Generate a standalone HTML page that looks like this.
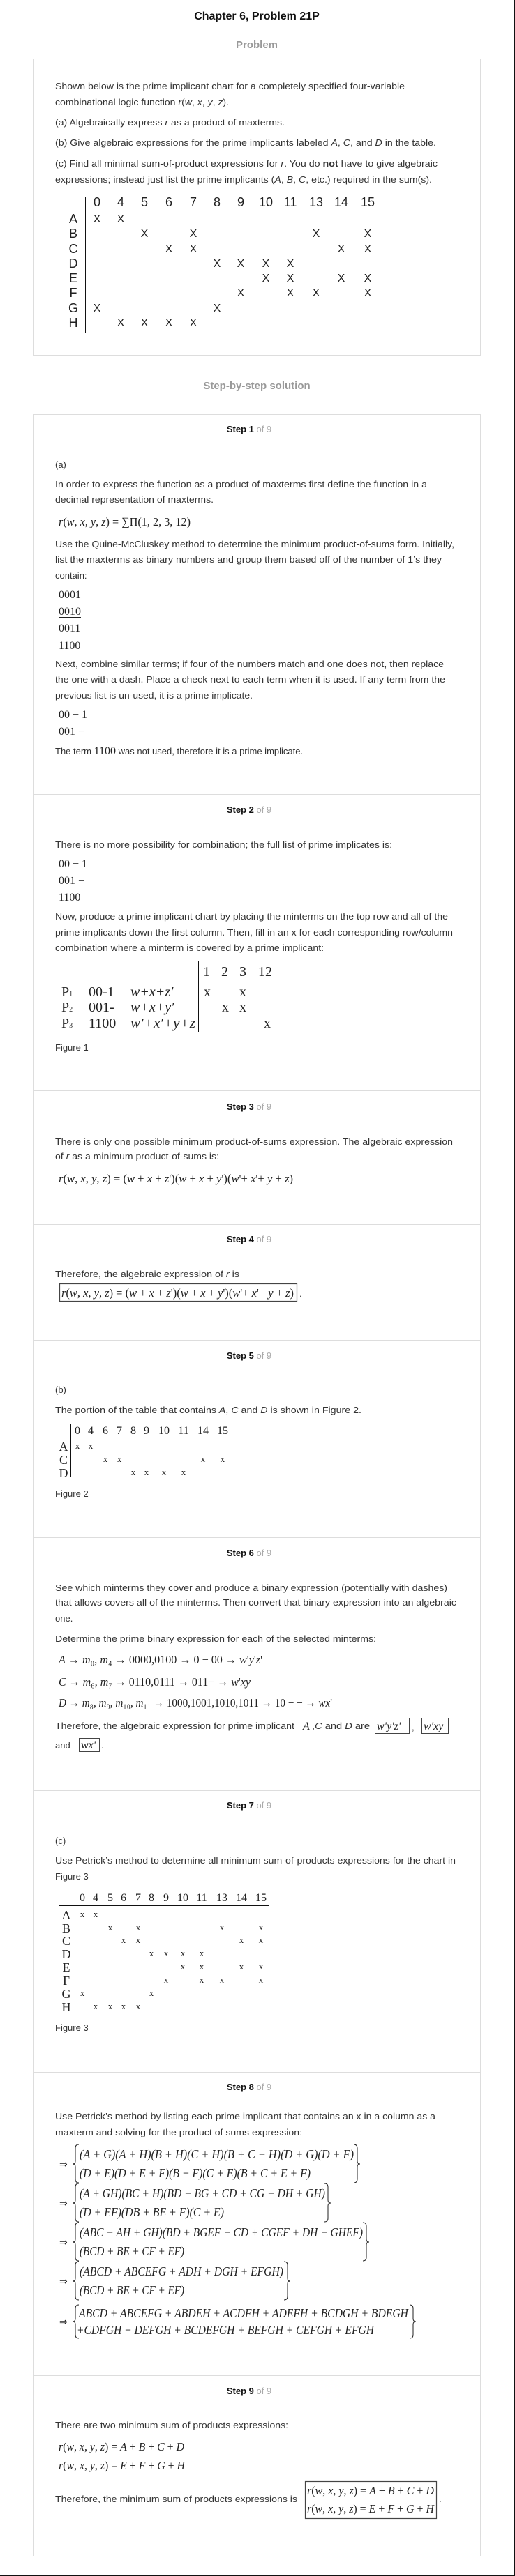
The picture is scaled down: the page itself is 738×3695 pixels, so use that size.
<!DOCTYPE html>
<html><head><meta charset="utf-8">
<style>
html,body{margin:0;padding:0;background:#fff;}
body{width:738px;height:3695px;overflow:hidden;}
svg{display:block;}
.s{font-family:"Liberation Sans",Arial,sans-serif;font-size:13px;fill:#333;}
.m{font-family:"Liberation Serif","Times New Roman",serif;fill:#222;}
.i{font-style:italic;}
.h{font-family:"Liberation Sans",Arial,sans-serif;font-weight:bold;}
</style></head><body>
<svg width="738" height="3695" viewBox="0 0 738 3695" xmlns="http://www.w3.org/2000/svg">
<rect x="0" y="0" width="738" height="3695" fill="#fff"/>
<rect x="736" y="0" width="2" height="3695" fill="#111"/>
<rect x="0" y="3693" width="738" height="2" fill="#111"/>

<!-- headers -->
<text x="368" y="28" text-anchor="middle" class="h" font-size="16" fill="#111">Chapter 6, Problem 21P</text>
<text x="368" y="69" text-anchor="middle" class="h" font-size="15" fill="#999">Problem</text>

<!-- problem box -->
<rect x="48.5" y="84.5" width="640" height="425" fill="none" stroke="#ddd" stroke-width="1"/>
<text x="79" y="128" class="s" textLength="501" lengthAdjust="spacingAndGlyphs">Shown below is the prime implicant chart for a completely specified four-variable</text>
<text x="79" y="151" class="s" textLength="249" lengthAdjust="spacingAndGlyphs">combinational logic function <tspan font-style="italic">r</tspan>(<tspan font-style="italic">w</tspan>, <tspan font-style="italic">x</tspan>, <tspan font-style="italic">y</tspan>, <tspan font-style="italic">z</tspan>).</text>
<text x="79" y="180" class="s" textLength="329" lengthAdjust="spacingAndGlyphs">(a) Algebraically express <tspan font-style="italic">r</tspan> as a product of maxterms.</text>
<text x="79" y="209" class="s" textLength="546" lengthAdjust="spacingAndGlyphs">(b) Give algebraic expressions for the prime implicants labeled <tspan font-style="italic">A</tspan>, <tspan font-style="italic">C</tspan>, and <tspan font-style="italic">D</tspan> in the table.</text>
<text x="79" y="239" class="s" textLength="548" lengthAdjust="spacingAndGlyphs">(c) Find all minimal sum-of-product expressions for <tspan font-style="italic">r</tspan>. You do <tspan font-weight="bold">not</tspan> have to give algebraic</text>
<text x="79" y="262" class="s" textLength="540" lengthAdjust="spacingAndGlyphs">expressions; instead just list the prime implicants (<tspan font-style="italic">A</tspan>, <tspan font-style="italic">B</tspan>, <tspan font-style="italic">C</tspan>, etc.) required in the sum(s).</text>

<!-- problem chart -->
<g font-family="'Liberation Sans',Arial,sans-serif" fill="#222" text-anchor="middle">
<line x1="122.5" y1="282" x2="122.5" y2="477" stroke="#111" stroke-width="1"/>
<line x1="88" y1="302.5" x2="546" y2="302.5" stroke="#111" stroke-width="1"/>
<g font-size="18">
<text x="139" y="296">0</text><text x="173" y="296">4</text><text x="207" y="296">5</text><text x="242" y="296">6</text><text x="277" y="296">7</text><text x="311" y="296">8</text><text x="345" y="296">9</text><text x="381" y="296">10</text><text x="416" y="296">11</text><text x="453" y="296">13</text><text x="489" y="296">14</text><text x="527" y="296">15</text>
<text x="105" y="320">A</text><text x="105" y="341">B</text><text x="105" y="363">C</text><text x="105" y="384">D</text><text x="105" y="405">E</text><text x="105" y="426">F</text><text x="105" y="448">G</text><text x="105" y="469">H</text>
</g>
<g font-size="16">
<text x="139" y="319">X</text><text x="173" y="319">X</text>
<text x="207" y="340">X</text><text x="277" y="340">X</text><text x="453" y="340">X</text><text x="527" y="340">X</text>
<text x="242" y="362">X</text><text x="277" y="362">X</text><text x="489" y="362">X</text><text x="527" y="362">X</text>
<text x="311" y="383">X</text><text x="345" y="383">X</text><text x="381" y="383">X</text><text x="416" y="383">X</text>
<text x="381" y="404">X</text><text x="416" y="404">X</text><text x="489" y="404">X</text><text x="527" y="404">X</text>
<text x="345" y="425">X</text><text x="416" y="425">X</text><text x="453" y="425">X</text><text x="527" y="425">X</text>
<text x="139" y="447">X</text><text x="311" y="447">X</text>
<text x="173" y="468">X</text><text x="207" y="468">X</text><text x="242" y="468">X</text><text x="277" y="468">X</text>
</g>
</g>

<text x="368" y="558" text-anchor="middle" class="h" font-size="15" fill="#999">Step-by-step solution</text>

<!-- solution box -->
<rect x="48.5" y="594.5" width="640" height="3072" fill="none" stroke="#ddd" stroke-width="1"/>
<g stroke="#ddd" stroke-width="1">
<line x1="49" y1="1139.5" x2="688" y2="1139.5"/>
<line x1="49" y1="1564.5" x2="688" y2="1564.5"/>
<line x1="49" y1="1756.5" x2="688" y2="1756.5"/>
<line x1="49" y1="1922.5" x2="688" y2="1922.5"/>
<line x1="49" y1="2205.5" x2="688" y2="2205.5"/>
<line x1="49" y1="2568.5" x2="688" y2="2568.5"/>
<line x1="49" y1="2972.5" x2="688" y2="2972.5"/>
<line x1="49" y1="3407.5" x2="688" y2="3407.5"/>
</g>

<!-- step headings -->
<g font-family="'Liberation Sans',Arial,sans-serif" font-size="13" text-anchor="middle">
<text x="357" y="620"><tspan font-weight="bold" fill="#111">Step 1</tspan><tspan fill="#aaa"> of 9</tspan></text>
<text x="357" y="1166"><tspan font-weight="bold" fill="#111">Step 2</tspan><tspan fill="#aaa"> of 9</tspan></text>
<text x="357" y="1592"><tspan font-weight="bold" fill="#111">Step 3</tspan><tspan fill="#aaa"> of 9</tspan></text>
<text x="357" y="1782"><tspan font-weight="bold" fill="#111">Step 4</tspan><tspan fill="#aaa"> of 9</tspan></text>
<text x="357" y="1949"><tspan font-weight="bold" fill="#111">Step 5</tspan><tspan fill="#aaa"> of 9</tspan></text>
<text x="357" y="2232"><tspan font-weight="bold" fill="#111">Step 6</tspan><tspan fill="#aaa"> of 9</tspan></text>
<text x="357" y="2594"><tspan font-weight="bold" fill="#111">Step 7</tspan><tspan fill="#aaa"> of 9</tspan></text>
<text x="357" y="2998"><tspan font-weight="bold" fill="#111">Step 8</tspan><tspan fill="#aaa"> of 9</tspan></text>
<text x="357" y="3434"><tspan font-weight="bold" fill="#111">Step 9</tspan><tspan fill="#aaa"> of 9</tspan></text>
</g>

<!-- Step 1 -->
<text x="79" y="671" class="s">(a)</text>
<text x="79" y="699" class="s" textLength="533" lengthAdjust="spacingAndGlyphs">In order to express the function as a product of maxterms first define the function in a</text>
<text x="79" y="721" class="s" textLength="227" lengthAdjust="spacingAndGlyphs">decimal representation of maxterms.</text>
<text x="84" y="754" class="m" font-size="17" textLength="189" lengthAdjust="spacingAndGlyphs"><tspan class="i">r</tspan>(<tspan class="i">w</tspan>, <tspan class="i">x</tspan>, <tspan class="i">y</tspan>, <tspan class="i">z</tspan>) = ∑Π(1, 2, 3, 12)</text>
<text x="79" y="785" class="s" textLength="572" lengthAdjust="spacingAndGlyphs">Use the Quine-McCluskey method to determine the minimum product-of-sums form. Initially,</text>
<text x="79" y="807" class="s" textLength="554" lengthAdjust="spacingAndGlyphs">list the maxterms as binary numbers and group them based off of the number of 1’s they</text>
<text x="79" y="830" class="s">contain:</text>
<g class="m" font-size="16">
<text x="84" y="858">0001</text>
<text x="84" y="882">0010</text>
<line x1="84" y1="885.5" x2="116" y2="885.5" stroke="#222" stroke-width="1"/>
<text x="84" y="906">0011</text>
<text x="84" y="931">1100</text>
</g>
<text x="79" y="957" class="s" textLength="557" lengthAdjust="spacingAndGlyphs">Next, combine similar terms; if four of the numbers match and one does not, then replace</text>
<text x="79" y="979" class="s" textLength="559" lengthAdjust="spacingAndGlyphs">the one with a dash. Place a check next to each term when it is used. If any term from the</text>
<text x="79" y="1002" class="s" textLength="283" lengthAdjust="spacingAndGlyphs">previous list is un-used, it is a prime implicate.</text>
<g class="m" font-size="16">
<text x="84" y="1030">00 − 1</text>
<text x="84" y="1054">001 −</text>
</g>
<text x="79" y="1082" class="s">The term <tspan font-family="'Liberation Serif',serif" font-size="16" fill="#222">1100</tspan> was not used, therefore it is a prime implicate.</text>

<!-- Step 2 -->
<text x="79" y="1216" class="s" textLength="483" lengthAdjust="spacingAndGlyphs">There is no more possibility for combination; the full list of prime implicates is:</text>
<g class="m" font-size="16">
<text x="84" y="1244">00 − 1</text>
<text x="84" y="1268">001 −</text>
<text x="84" y="1292">1100</text>
</g>
<text x="79" y="1319" class="s" textLength="563" lengthAdjust="spacingAndGlyphs">Now, produce a prime implicant chart by placing the minterms on the top row and all of the</text>
<text x="79" y="1342" class="s" textLength="570" lengthAdjust="spacingAndGlyphs">prime implicants down the first column. Then, fill in an x for each corresponding row/column</text>
<text x="79" y="1364" class="s" textLength="385" lengthAdjust="spacingAndGlyphs">combination where a minterm is covered by a prime implicant:</text>
<g class="m" font-size="20">
<line x1="284.5" y1="1378" x2="284.5" y2="1480" stroke="#111"/>
<line x1="84" y1="1408.5" x2="393" y2="1408.5" stroke="#111"/>
<g text-anchor="middle">
<text x="296" y="1400">1</text><text x="322" y="1400">2</text><text x="348" y="1400">3</text><text x="380" y="1400">12</text>
<text x="297" y="1429">x</text><text x="348" y="1429">x</text>
<text x="323" y="1451">x</text><text x="348" y="1451">x</text>
<text x="383" y="1474">x</text>
</g>
<text x="88" y="1429">P<tspan font-size="10">1</tspan></text>
<text x="127" y="1429">00-1</text>
<text x="187" y="1429" class="i">w+x+z′</text>
<text x="88" y="1451">P<tspan font-size="10">2</tspan></text>
<text x="127" y="1451">001-</text>
<text x="187" y="1451" class="i">w+x+y′</text>
<text x="88" y="1474">P<tspan font-size="10">3</tspan></text>
<text x="127" y="1474">1100</text>
<text x="187" y="1474" class="i" textLength="93" lengthAdjust="spacingAndGlyphs">w′+x′+y+z</text>
</g>
<text x="79" y="1507" class="s">Figure 1</text>

<!-- Step 3 -->
<text x="79" y="1642" class="s" textLength="570" lengthAdjust="spacingAndGlyphs">There is only one possible minimum product-of-sums expression. The algebraic expression</text>
<text x="79" y="1663" class="s" textLength="235" lengthAdjust="spacingAndGlyphs">of <tspan font-style="italic">r</tspan> as a minimum product-of-sums is:</text>
<text x="84" y="1696" class="m" font-size="17" textLength="336" lengthAdjust="spacingAndGlyphs"><tspan class="i">r</tspan>(<tspan class="i">w</tspan>, <tspan class="i">x</tspan>, <tspan class="i">y</tspan>, <tspan class="i">z</tspan>) = (<tspan class="i">w</tspan> + <tspan class="i">x</tspan> + <tspan class="i">z</tspan>')(<tspan class="i">w</tspan> + <tspan class="i">x</tspan> + <tspan class="i">y</tspan>')(<tspan class="i">w</tspan>'+ <tspan class="i">x</tspan>'+ <tspan class="i">y</tspan> + <tspan class="i">z</tspan>)</text>

<!-- Step 4 -->
<text x="79" y="1832" class="s" textLength="264" lengthAdjust="spacingAndGlyphs">Therefore, the algebraic expression of <tspan font-style="italic">r</tspan> is</text>
<rect x="85.5" y="1841.5" width="340" height="25" fill="none" stroke="#444" stroke-width="1.2"/>
<text x="88" y="1860" class="m" font-size="17" textLength="333" lengthAdjust="spacingAndGlyphs"><tspan class="i">r</tspan>(<tspan class="i">w</tspan>, <tspan class="i">x</tspan>, <tspan class="i">y</tspan>, <tspan class="i">z</tspan>) = (<tspan class="i">w</tspan> + <tspan class="i">x</tspan> + <tspan class="i">z</tspan>')(<tspan class="i">w</tspan> + <tspan class="i">x</tspan> + <tspan class="i">y</tspan>')(<tspan class="i">w</tspan>'+ <tspan class="i">x</tspan>'+ <tspan class="i">y</tspan> + <tspan class="i">z</tspan>)</text>
<text x="429" y="1860" class="s">.</text>

<!-- Step 5 -->
<text x="79" y="1998" class="s">(b)</text>
<text x="79" y="2027" class="s" textLength="439" lengthAdjust="spacingAndGlyphs">The portion of the table that contains <tspan font-style="italic">A</tspan>, <tspan font-style="italic">C</tspan> and <tspan font-style="italic">D</tspan> is shown in Figure 2.</text>
<g class="m" text-anchor="middle">
<line x1="101.5" y1="2042" x2="101.5" y2="2119" stroke="#111"/>
<line x1="85" y1="2062.5" x2="328" y2="2062.5" stroke="#111"/>
<g font-size="16">
<text x="111" y="2057">0</text><text x="130" y="2057">4</text><text x="151" y="2057">6</text><text x="171" y="2057">7</text><text x="191" y="2057">8</text><text x="210" y="2057">9</text><text x="235" y="2057">10</text><text x="263" y="2057">11</text><text x="291" y="2057">14</text><text x="319" y="2057">15</text>
</g>
<g font-size="18">
<text x="91" y="2081">A</text><text x="91" y="2100">C</text><text x="91" y="2119">D</text>
</g>
<g font-size="13">
<text x="111" y="2078">x</text><text x="130" y="2078">x</text>
<text x="151" y="2097">x</text><text x="171" y="2097">x</text><text x="291" y="2097">x</text><text x="319" y="2097">x</text>
<text x="191" y="2116">x</text><text x="210" y="2116">x</text><text x="235" y="2116">x</text><text x="263" y="2116">x</text>
</g>
</g>
<text x="79" y="2147" class="s">Figure 2</text>

<!-- Step 6 -->
<text x="79" y="2282" class="s" textLength="562" lengthAdjust="spacingAndGlyphs">See which minterms they cover and produce a binary expression (potentially with dashes)</text>
<text x="79" y="2303" class="s" textLength="575" lengthAdjust="spacingAndGlyphs">that allows covers all of the minterms. Then convert that binary expression into an algebraic</text>
<text x="79" y="2326" class="s">one.</text>
<text x="79" y="2355" class="s" textLength="460" lengthAdjust="spacingAndGlyphs">Determine the prime binary expression for each of the selected minterms:</text>
<g class="m" font-size="17">
<text x="84" y="2386" textLength="292" lengthAdjust="spacingAndGlyphs"><tspan class="i">A</tspan> → <tspan class="i">m</tspan>₀, <tspan class="i">m</tspan>₄ → 0000,0100 → 0 − 00 → <tspan class="i">w</tspan>'<tspan class="i">y</tspan>'<tspan class="i">z</tspan>'</text>
<text x="84" y="2418" textLength="275" lengthAdjust="spacingAndGlyphs"><tspan class="i">C</tspan> → <tspan class="i">m</tspan>₆, <tspan class="i">m</tspan>₇ → 0110,0111 → 011− → <tspan class="i">w</tspan>'<tspan class="i">xy</tspan></text>
<text x="84" y="2448" textLength="392" lengthAdjust="spacingAndGlyphs"><tspan class="i">D</tspan> → <tspan class="i">m</tspan>₈, <tspan class="i">m</tspan>₉, <tspan class="i">m</tspan>₁₀, <tspan class="i">m</tspan>₁₁ → 1000,1001,1010,1011 → 10 − − → <tspan class="i">wx</tspan>'</text>
</g>
<text x="79" y="2480" class="s" textLength="343" lengthAdjust="spacingAndGlyphs">Therefore, the algebraic expression for prime implicant</text>
<text x="434" y="2481" class="m i" font-size="16">A</text>
<text x="447" y="2480" class="s" textLength="83" lengthAdjust="spacingAndGlyphs">,<tspan font-style="italic">C</tspan> and <tspan font-style="italic">D</tspan> are</text>
<rect x="537.5" y="2464.5" width="49" height="22" fill="none" stroke="#444"/>
<text x="540" y="2481" class="m i" font-size="16">w'y'z'</text>
<text x="590" y="2482" class="s">,</text>
<rect x="604.5" y="2464.5" width="38" height="22" fill="none" stroke="#444"/>
<text x="607" y="2481" class="m i" font-size="16">w'xy</text>
<text x="79" y="2508" class="s">and</text>
<rect x="113.5" y="2493.5" width="29" height="19" fill="none" stroke="#444"/>
<text x="116" y="2508" class="m i" font-size="16">wx'</text>
<text x="145" y="2508" class="s">.</text>

<!-- Step 7 -->
<text x="79" y="2645" class="s">(c)</text>
<text x="79" y="2673" class="s" textLength="574" lengthAdjust="spacingAndGlyphs">Use Petrick’s method to determine all minimum sum-of-products expressions for the chart in</text>
<text x="79" y="2696" class="s">Figure 3</text>
<g class="m" text-anchor="middle">
<line x1="107.5" y1="2712" x2="107.5" y2="2886" stroke="#111"/>
<line x1="84" y1="2733.5" x2="385" y2="2733.5" stroke="#111"/>
<g font-size="16">
<text x="118" y="2727">0</text><text x="137" y="2727">4</text><text x="158" y="2727">5</text><text x="177" y="2727">6</text><text x="198" y="2727">7</text><text x="217" y="2727">8</text><text x="238" y="2727">9</text><text x="262" y="2727">10</text><text x="289" y="2727">11</text><text x="318" y="2727">13</text><text x="346" y="2727">14</text><text x="374" y="2727">15</text>
</g>
<g font-size="18">
<text x="95" y="2753">A</text><text x="95" y="2772">B</text><text x="95" y="2790">C</text><text x="95" y="2809">D</text><text x="95" y="2828">E</text><text x="95" y="2847">F</text><text x="95" y="2866">G</text><text x="95" y="2885">H</text>
</g>
<g font-size="13">
<text x="118" y="2750">x</text><text x="137" y="2750">x</text>
<text x="158" y="2769">x</text><text x="198" y="2769">x</text><text x="318" y="2769">x</text><text x="374" y="2769">x</text>
<text x="177" y="2787">x</text><text x="198" y="2787">x</text><text x="346" y="2787">x</text><text x="374" y="2787">x</text>
<text x="217" y="2806">x</text><text x="238" y="2806">x</text><text x="262" y="2806">x</text><text x="289" y="2806">x</text>
<text x="262" y="2825">x</text><text x="289" y="2825">x</text><text x="346" y="2825">x</text><text x="374" y="2825">x</text>
<text x="238" y="2844">x</text><text x="289" y="2844">x</text><text x="318" y="2844">x</text><text x="374" y="2844">x</text>
<text x="118" y="2863">x</text><text x="217" y="2863">x</text>
<text x="137" y="2882">x</text><text x="158" y="2882">x</text><text x="177" y="2882">x</text><text x="198" y="2882">x</text>
</g>
</g>
<text x="79" y="2913" class="s">Figure 3</text>

<!-- Step 8 -->
<text x="79" y="3040" class="s" textLength="545" lengthAdjust="spacingAndGlyphs">Use Petrick’s method by listing each prime implicant that contains an x in a column as a</text>
<text x="79" y="3063" class="s" textLength="354" lengthAdjust="spacingAndGlyphs">maxterm and solving for the product of sums expression:</text>
<g fill="none" stroke="#222" stroke-width="1">
<path d="M113 3076 Q108 3076 108 3081 L108 3100 Q108 3104 104 3104 Q108 3104 108 3108 L108 3126 Q108 3131 113 3131"/>
<path d="M507 3076 Q512 3076 512 3081 L512 3100 Q512 3104 516 3104 Q512 3104 512 3108 L512 3126 Q512 3131 507 3131"/>
<path d="M113 3132 Q108 3132 108 3137 L108 3156 Q108 3160 104 3160 Q108 3160 108 3164 L108 3182 Q108 3187 113 3187"/>
<path d="M465 3132 Q470 3132 470 3137 L470 3156 Q470 3160 474 3160 Q470 3160 470 3164 L470 3182 Q470 3187 465 3187"/>
<path d="M113 3188 Q108 3188 108 3193 L108 3212 Q108 3216 104 3216 Q108 3216 108 3220 L108 3238 Q108 3243 113 3243"/>
<path d="M520 3188 Q525 3188 525 3193 L525 3212 Q525 3216 529 3216 Q525 3216 525 3220 L525 3238 Q525 3243 520 3243"/>
<path d="M113 3244 Q108 3244 108 3249 L108 3268 Q108 3272 104 3272 Q108 3272 108 3276 L108 3294 Q108 3299 113 3299"/>
<path d="M407 3244 Q412 3244 412 3249 L412 3268 Q412 3272 416 3272 Q412 3272 412 3276 L412 3294 Q412 3299 407 3299"/>
<path d="M113 3306 Q108 3306 108 3311 L108 3326 Q108 3330 104 3330 Q108 3330 108 3334 L108 3349 Q108 3354 113 3354"/>
<path d="M587 3306 Q592 3306 592 3311 L592 3326 Q592 3330 596 3330 Q592 3330 592 3334 L592 3349 Q592 3354 587 3354"/>
</g>
<g font-family="'Liberation Serif',serif" font-size="14" fill="#222">
<text x="85" y="3109">⇒</text><text x="85" y="3165">⇒</text><text x="85" y="3221">⇒</text><text x="85" y="3277">⇒</text><text x="85" y="3335">⇒</text>
</g>
<g class="m i" font-size="18">
<text x="114" y="3096" textLength="393" lengthAdjust="spacingAndGlyphs">(A + G)(A + H)(B + H)(C + H)(B + C + H)(D + G)(D + F)</text>
<text x="114" y="3123" textLength="331" lengthAdjust="spacingAndGlyphs">(D + E)(D + E + F)(B + F)(C + E)(B + C + E + F)</text>
<text x="114" y="3152" textLength="352" lengthAdjust="spacingAndGlyphs">(A + GH)(BC + H)(BD + BG + CD + CG + DH + GH)</text>
<text x="114" y="3179" textLength="207" lengthAdjust="spacingAndGlyphs">(D + EF)(DB + BE + F)(C + E)</text>
<text x="114" y="3208" textLength="406" lengthAdjust="spacingAndGlyphs">(ABC + AH + GH)(BD + BGEF + CD + CGEF + DH + GHEF)</text>
<text x="114" y="3235" textLength="150" lengthAdjust="spacingAndGlyphs">(BCD + BE + CF + EF)</text>
<text x="114" y="3264" textLength="292" lengthAdjust="spacingAndGlyphs">(ABCD + ABCEFG + ADH + DGH + EFGH)</text>
<text x="114" y="3291" textLength="150" lengthAdjust="spacingAndGlyphs">(BCD + BE + CF + EF)</text>
<text x="113" y="3324" textLength="472" lengthAdjust="spacingAndGlyphs">ABCD + ABCEFG + ABDEH + ACDFH + ADEFH + BCDGH + BDEGH</text>
<text x="110" y="3348" textLength="426" lengthAdjust="spacingAndGlyphs">+CDFGH + DEFGH + BCDEFGH + BEFGH + CEFGH + EFGH</text>
</g>

<!-- Step 9 -->
<text x="79" y="3483" class="s" textLength="334" lengthAdjust="spacingAndGlyphs">There are two minimum sum of products expressions:</text>
<g class="m" font-size="17">
<text x="84" y="3515" textLength="180" lengthAdjust="spacingAndGlyphs"><tspan class="i">r</tspan>(<tspan class="i">w</tspan>, <tspan class="i">x</tspan>, <tspan class="i">y</tspan>, <tspan class="i">z</tspan>) = <tspan class="i">A</tspan> + <tspan class="i">B</tspan> + <tspan class="i">C</tspan> + <tspan class="i">D</tspan></text>
<text x="84" y="3542" textLength="181" lengthAdjust="spacingAndGlyphs"><tspan class="i">r</tspan>(<tspan class="i">w</tspan>, <tspan class="i">x</tspan>, <tspan class="i">y</tspan>, <tspan class="i">z</tspan>) = <tspan class="i">E</tspan> + <tspan class="i">F</tspan> + <tspan class="i">G</tspan> + <tspan class="i">H</tspan></text>
</g>
<text x="79" y="3589" class="s" textLength="347" lengthAdjust="spacingAndGlyphs">Therefore, the minimum sum of products expressions is</text>
<rect x="437.5" y="3559.5" width="188" height="53" fill="none" stroke="#444" stroke-width="1.2"/>
<g class="m" font-size="17">
<text x="440" y="3578" textLength="182" lengthAdjust="spacingAndGlyphs"><tspan class="i">r</tspan>(<tspan class="i">w</tspan>, <tspan class="i">x</tspan>, <tspan class="i">y</tspan>, <tspan class="i">z</tspan>) = <tspan class="i">A</tspan> + <tspan class="i">B</tspan> + <tspan class="i">C</tspan> + <tspan class="i">D</tspan></text>
<text x="440" y="3604" textLength="182" lengthAdjust="spacingAndGlyphs"><tspan class="i">r</tspan>(<tspan class="i">w</tspan>, <tspan class="i">x</tspan>, <tspan class="i">y</tspan>, <tspan class="i">z</tspan>) = <tspan class="i">E</tspan> + <tspan class="i">F</tspan> + <tspan class="i">G</tspan> + <tspan class="i">H</tspan></text>
</g>
<text x="629" y="3589" class="s">.</text>
</svg>
</body></html>
